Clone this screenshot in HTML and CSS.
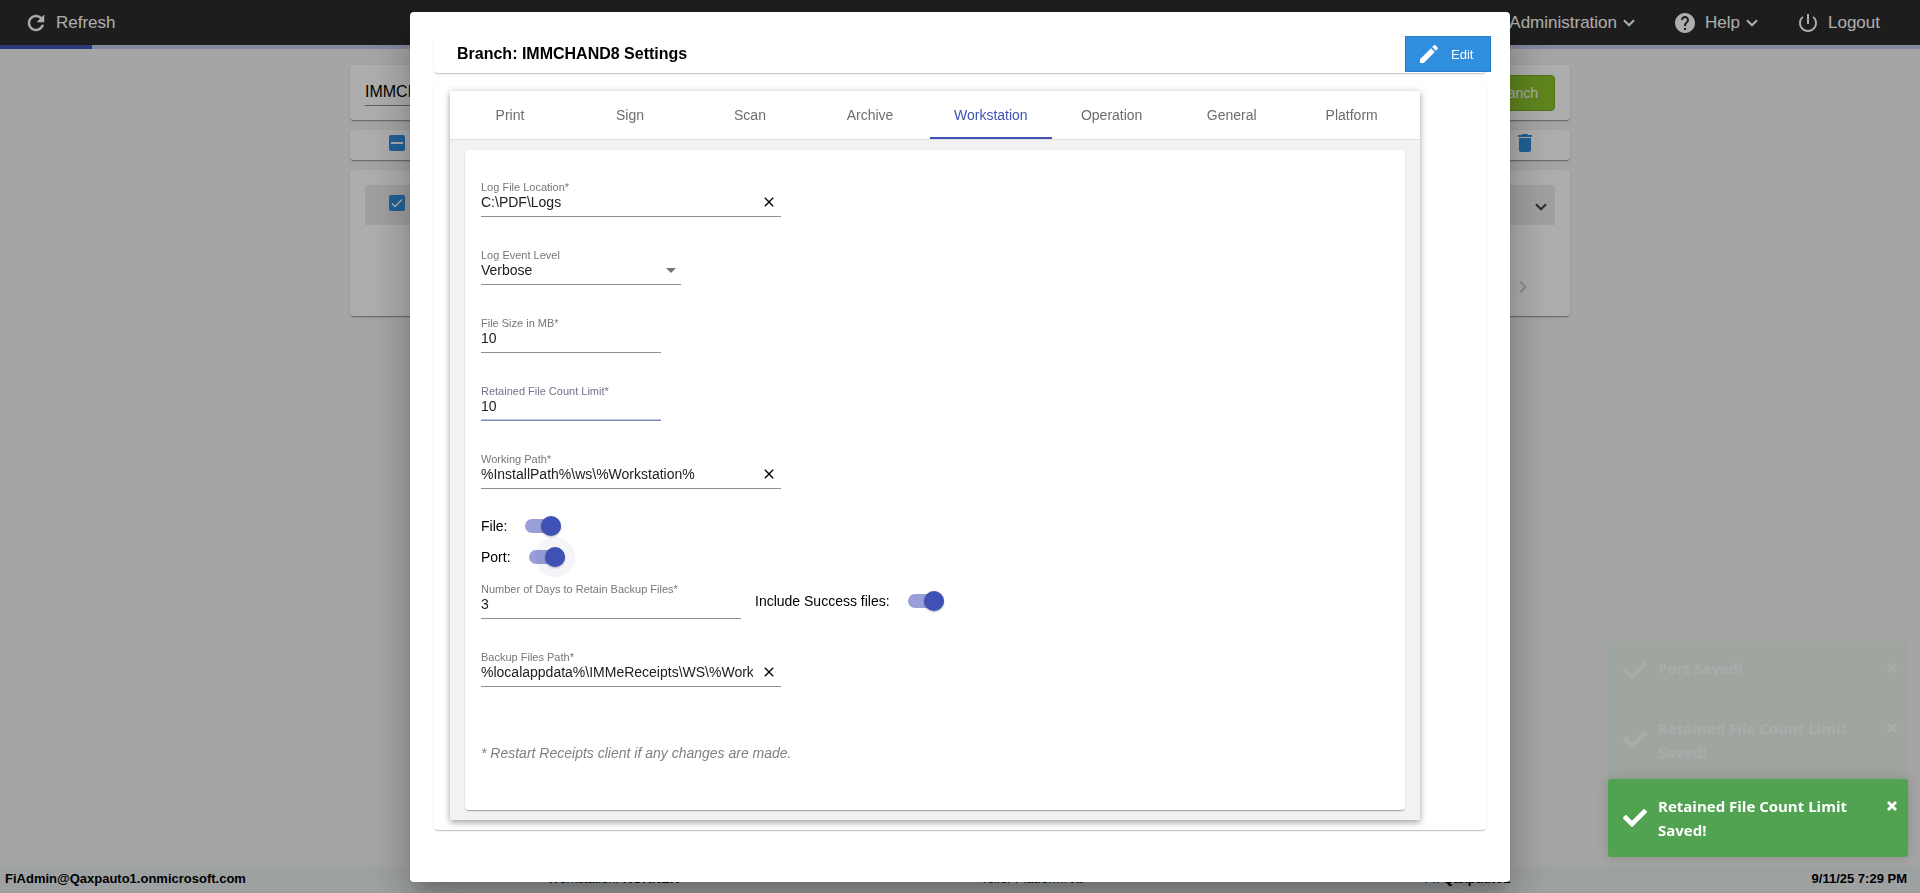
FILE: index.html
```html
<!DOCTYPE html>
<html lang="en">
<head>
<meta charset="utf-8">
<title>Branch Settings</title>
<link rel="stylesheet" href="styles.css">
</head>
<body>
<svg class="sprite" aria-hidden="true">
  <symbol id="i-close" viewBox="0 0 24 24"><path fill="currentColor" d="M19 6.4 17.6 5 12 10.600 6.400 5 5 6.400 10.600 12 5 17.600 6.400 19 12 13.400 17.600 19 19 17.600 13.400 12z"/></symbol>
  <symbol id="i-down" viewBox="0 0 12 8"><path fill="none" stroke="currentColor" stroke-width="2.200" d="M1 1.200 6 6.200 11 1.200"/></symbol>
  <symbol id="i-tick" viewBox="0 0 512 512"><path fill="currentColor" d="M173.900 439.400 7.500 273c-10-10-10-26.200 0-36.200l36.200-36.200c10-10 26.200-10 36.200 0L192 312.700 432.100 72.600c10-10 26.200-10 36.200 0l36.200 36.200c10 10 10 26.200 0 36.200L210.100 439.400c-10 10-26.200 10-36.200 0z"/></symbol>
  <symbol id="i-times" viewBox="0 0 10 10"><path fill="none" stroke="currentColor" stroke-width="2.800" d="M1 1 9 9M9 1 1 9"/></symbol>
</svg>

<div class="app">
  <header class="topbar">
    <button class="nav" type="button">
      <svg class="i24" viewBox="0 0 24 24"><path fill="currentColor" stroke="currentColor" stroke-width=".5" d="M17.650 6.350C16.200 4.900 14.210 4 12 4c-4.420 0-7.990 3.580-7.990 8s3.570 8 7.990 8c3.730 0 6.840-2.550 7.730-6h-2.080c-.82 2.330-3.040 4-5.650 4-3.310 0-6-2.690-6-6s2.690-6 6-6c1.660 0 3.140.69 4.220 1.780L13 11h7V4l-2.350 2.350z"/></svg>
      Refresh
    </button>
    <nav class="menu">
      <button class="nav" type="button">Administration <svg class="caret"><use href="#i-down"/></svg></button>
      <button class="nav" type="button">
        <svg class="i24" viewBox="0 0 24 24"><path fill="currentColor" d="M12 2C6.480 2 2 6.480 2 12s4.480 10 10 10 10-4.480 10-10S17.520 2 12 2zm1 17h-2v-2h2v2zm2.070-7.750-.9.920C13.450 12.900 13 13.500 13 15h-2v-.5c0-1.100.45-2.100 1.170-2.830l1.240-1.260c.37-.36.59-.86.59-1.410 0-1.100-.9-2-2-2s-2 .9-2 2H8c0-2.210 1.790-4 4-4s4 1.790 4 4c0 .88-.36 1.680-.93 2.250z"/></svg>
        Help <svg class="caret"><use href="#i-down"/></svg>
      </button>
      <button class="nav" type="button">
        <svg class="i24" viewBox="0 0 24 24"><path fill="currentColor" d="M13 3h-2v10h2V3zm4.830 2.170-1.420 1.420C17.990 7.860 19 9.810 19 12c0 3.870-3.130 7-7 7s-7-3.130-7-7c0-2.190 1.010-4.140 2.580-5.420L6.170 5.170C4.230 6.820 3 9.260 3 12c0 4.970 4.030 9 9 9s9-4.030 9-9c0-2.740-1.230-5.180-3.170-6.830z"/></svg>
        Logout
      </button>
    </nav>
  </header>
  <div class="progress"><div class="progress-fill"></div></div>

  <main class="page">
    <section class="card search-card">
      <input class="search" type="text" value="IMMCHAND8" aria-label="Search branches">
      <button class="add" type="button">Add Branch</button>
    </section>
    <section class="card bulk-card">
      <span class="box"><input type="checkbox" aria-label="Select all"><svg viewBox="0 0 16 16"><path stroke="currentColor" stroke-width="2" d="M2 8h12"/></svg></span>
      <button class="icon-btn trash" type="button" aria-label="Delete"><svg class="i24" viewBox="0 0 24 24"><path fill="currentColor" d="M6 19c0 1.100.9 2 2 2h8c1.100 0 2-.9 2-2V7H6v12zM19 4h-3.500l-1-1h-5l-1 1H5v2h14V4z"/></svg></button>
    </section>
    <section class="card list-card">
      <div class="row">
        <span class="box"><input type="checkbox" checked aria-label="Select branch"><svg viewBox="0 0 16 16"><path fill="none" stroke="currentColor" stroke-width="1.500" d="M3 8.500 6 11.500 13 4.500"/></svg></span>
        <button class="icon-btn" type="button" aria-label="Expand"><svg class="caret"><use href="#i-down"/></svg></button>
      </div>
      <div class="pager"><button class="icon-btn" type="button" aria-label="Next page"><svg class="i24" viewBox="0 0 24 24"><path fill="currentColor" d="M10 6 8.590 7.410 13.170 12l-4.580 4.590L10 18l6-6z"/></svg></button></div>
    </section>
  </main>

  <footer class="status">
    <span>FiAdmin@Qaxpauto1.onmicrosoft.com</span>
    <span><span class="thin">Workstation:</span> KORNER</span>
    <span class="platform"><span class="thin">Teller Platform:</span> XP</span>
    <span><span class="thin">FI:</span> Qaxpauto1</span>
    <span>9/11/25 7:29 PM</span>
  </footer>
</div>

<div class="overlay">
  <div class="dialog" role="dialog" aria-labelledby="dlg-title">
    <div class="dlg-head">
      <h1 id="dlg-title">Branch: IMMCHAND8 Settings</h1>
      <button class="edit" type="button">
        <svg class="i24" viewBox="0 0 24 24"><path fill="currentColor" d="M3 17.250V21h3.750L17.810 9.940l-3.750-3.750L3 17.250zM20.710 7.040c.39-.39.39-1.020 0-1.410l-2.340-2.340c-.39-.39-1.020-.39-1.410 0l-1.830 1.830 3.750 3.750 1.830-1.830z"/></svg>
        Edit
      </button>
    </div>
    <div class="dlg-body">
      <div class="tabs-panel">
        <div class="tabs" role="tablist">
          <button class="tab" role="tab" type="button">Print</button>
          <button class="tab" role="tab" type="button">Sign</button>
          <button class="tab" role="tab" type="button">Scan</button>
          <button class="tab" role="tab" type="button">Archive</button>
          <button class="tab active" role="tab" type="button" aria-selected="true">Workstation</button>
          <button class="tab" role="tab" type="button">Operation</button>
          <button class="tab" role="tab" type="button">General</button>
          <button class="tab" role="tab" type="button">Platform</button>
        </div>
        <form class="form">
          <div class="fields">
            <div class="field wide">
              <label for="log">Log File Location*</label>
              <div class="control"><input id="log" type="text" value="C:\PDF\Logs"><button class="clear" type="button" aria-label="Clear"><svg><use href="#i-close"/></svg></button></div>
            </div>
            <div class="field level">
              <label for="level">Log Event Level</label>
              <div class="control"><select id="level"><option>Verbose</option></select><span class="arrow"></span></div>
            </div>
            <div class="field short">
              <label for="size">File Size in MB*</label>
              <div class="control"><input id="size" type="text" value="10"></div>
            </div>
            <div class="field short leaving">
              <label for="count">Retained File Count Limit*</label>
              <div class="control"><input id="count" type="text" value="10"></div>
            </div>
            <div class="field wide">
              <label for="work">Working Path*</label>
              <div class="control"><input id="work" type="text" value="%InstallPath%\ws\%Workstation%"><button class="clear" type="button" aria-label="Clear"><svg><use href="#i-close"/></svg></button></div>
            </div>
          </div>
          <div class="toggles">
            <label class="toggle">File:<input type="checkbox" role="switch" checked></label>
            <label class="toggle pressed">Port:<input type="checkbox" role="switch" checked></label>
          </div>
          <div class="fields">
            <div class="pair">
              <div class="field days">
                <label for="days">Number of Days to Retain Backup Files*</label>
                <div class="control"><input id="days" type="text" value="3"></div>
              </div>
              <label class="toggle">Include Success files:<input type="checkbox" role="switch" checked></label>
            </div>
            <div class="field wide">
              <label for="backup">Backup Files Path*</label>
              <div class="control"><input id="backup" type="text" value="%localappdata%\IMMeReceipts\WS\%Workstation%"><button class="clear" type="button" aria-label="Clear"><svg><use href="#i-close"/></svg></button></div>
            </div>
          </div>
          <p class="note">* Restart Receipts client if any changes are made.</p>
        </form>
      </div>
    </div>
  </div>
</div>

<div class="toasts">
  <div class="toast fading"><svg class="tick"><use href="#i-tick"/></svg><span class="msg">Port Saved!</span><button type="button" aria-label="Close"><svg><use href="#i-times"/></svg></button></div>
  <div class="toast fading"><svg class="tick"><use href="#i-tick"/></svg><span class="msg">Retained File Count Limit Saved!</span><button type="button" aria-label="Close"><svg><use href="#i-times"/></svg></button></div>
  <div class="toast"><svg class="tick"><use href="#i-tick"/></svg><span class="msg">Retained File Count Limit Saved!</span><button type="button" aria-label="Close"><svg><use href="#i-times"/></svg></button></div>
</div>
</body>
</html>
```
FILE: styles.css
```css
* { box-sizing: border-box; }
body { margin: 0; font-family: "Liberation Sans", Arial, sans-serif; font-size: 14px; color: #000; background: #f3f3f3; }
button, input, select { font: inherit; color: inherit; background: none; border: 0; margin: 0; padding: 0; outline: 0; border-radius: 0; }
.sprite { display: none; }
.i24 { width: 24px; height: 24px; flex: none; display: block; }

.app { min-height: 100vh; display: flex; flex-direction: column; }
.topbar { height: 45px; background: #2c2c2c; color: #fff; display: flex; align-items: center; justify-content: space-between; padding: 0 40px 0 24px; font-size: 17px; }
.menu { display: flex; gap: 38px; }
.nav { display: flex; align-items: center; gap: 8px; }
.caret { width: 12px; height: 8px; flex: none; display: block; }
.nav .caret { margin-left: -2px; }
.progress { height: 4px; background: #c5cae9; }
.progress-fill { width: 92px; height: 4px; background: #3f51b5; }

.page { flex: 1; width: 100%; max-width: 1220px; margin: 0 auto; padding-top: 16px; display: flex; flex-direction: column; gap: 10px; }
.card { background: #fff; border-radius: 4px; box-shadow: 0 2px 1px -1px rgba(0,0,0,.2), 0 1px 1px rgba(0,0,0,.14), 0 1px 3px rgba(0,0,0,.12); }
.search-card { display: flex; justify-content: space-between; align-items: flex-start; padding: 10px 15px 9px; }
.search { width: 300px; height: 31px; padding-top: 3px; font-size: 16px; border-bottom: 1px solid #8a8a8a; }
.add { height: 36px; padding: 0 16px; color: #fff; background: #8cc42b; border: 1px solid #78a822; border-radius: 4px; }
.bulk-card { height: 30px; display: flex; align-items: center; justify-content: space-between; padding: 0 33px 4px 39px; }
.list-card { padding: 15px 15px 17px; }
.row { height: 40px; background: #ebebeb; display: flex; align-items: flex-start; justify-content: space-between; padding: 10px 8px 0 24px; color: #444; }
.row .icon-btn { padding-top: 8px; }
.pager { display: flex; justify-content: flex-end; padding: 50px 20px 0 0; color: #cfcfcf; }
.box { display: grid; width: 16px; height: 16px; border-radius: 2px; background: #308ede; color: #fff; }
.box input, .box svg { grid-area: 1 / 1; width: 16px; height: 16px; appearance: none; }
.trash { color: #308ede; }

.status { height: 26px; flex: none; background: #e9edee; display: flex; justify-content: space-between; align-items: center; padding: 0 13px 3px 5px; font-size: 13px; font-weight: 700; }
.thin { font-weight: 400; }
.platform { padding-right: 35px; }

.overlay { position: fixed; inset: 0; background: rgba(0,0,0,.32); display: flex; justify-content: center; align-items: flex-start; padding-top: 12px; }
.dialog { width: 1100px; max-width: 90vw; background: #fff; border-radius: 4px; padding: 24px 24px 52px; box-shadow: 0 11px 15px -7px rgba(0,0,0,.2), 0 24px 38px 3px rgba(0,0,0,.14), 0 9px 46px 8px rgba(0,0,0,.12); }
.dlg-head, .dlg-body { border-radius: 4px; box-shadow: 0 2px 1px -1px rgba(0,0,0,.14), 0 1px 1px rgba(0,0,0,.08), 0 1px 3px rgba(0,0,0,.06); }
.dlg-head { height: 37px; display: flex; align-items: flex-start; justify-content: space-between; padding-left: 23px; margin-bottom: 8px; }
.dlg-head h1 { margin: 0; font-size: 16px; line-height: 36px; }
.edit { display: flex; align-items: center; gap: 10px; width: 86px; height: 36px; padding-left: 11px; margin-right: -5px; background: #308ede; border: 1px solid #2a7cc4; color: #fff; font-size: 13px; }
.dlg-body { padding: 10px 66px 10px 16px; }
.tabs-panel { padding-bottom: 10px; background: #f2f2f2; box-shadow: 0 3px 6px rgba(0,0,0,.28), 0 0 8px rgba(0,0,0,.12); }
.tabs { display: flex; margin-bottom: 10px; background: #fff; border-bottom: 1px solid #dedede; }
.tab { height: 48px; min-width: 120px; padding: 2px 24px 0; color: #6d6d6d; border-bottom: 2px solid transparent; }
.tab.active { color: #3f51b5; border-bottom-color: #3f51b5; }
.form { display: flow-root; margin: 0 15px; padding: 31px 16px 47px; background: #fff; border-radius: 4px; box-shadow: 0 2px 1px -1px rgba(0,0,0,.2), 0 1px 1px rgba(0,0,0,.1), 0 1px 3px rgba(0,0,0,.08); }
.fields { display: flex; flex-direction: column; gap: 32px; align-items: flex-start; }
.field { border-bottom: 1px solid #8f8f8f; padding-bottom: 5px; }
.field label { display: block; font-size: 11px; line-height: 12px; color: #777; white-space: nowrap; }
.control { display: flex; align-items: center; height: 18px; }
.control input, .control select { flex: 1; min-width: 0; height: 18px; color: #212121; appearance: none; }
.wide { width: 300px; }
.level { width: 200px; }
.short { width: 180px; }
.days { width: 260px; }
.leaving { border-bottom-color: #7c88b8; box-shadow: inset 0 -1px #c0c6e0; }
.field.leaving label { color: #73738a; }
.clear { width: 24px; height: 16px; margin-left: 4px; display: grid; place-items: center; color: #000; }
.clear svg { width: 16px; height: 16px; }
.arrow { border: 5px solid transparent; border-top-color: #757575; border-bottom: 0; margin-right: 5px; }
.toggles { margin: 25px 0 14px; display: flex; flex-direction: column; gap: 7px; }
.toggle { display: flex; align-items: center; gap: 18px; height: 24px; }
.toggle input { appearance: none; width: 36px; height: 14px; border-radius: 7px; background: #989fd9; display: flex; align-items: center; justify-content: flex-end; }
.toggle input::after { content: ""; width: 20px; height: 20px; flex: none; border-radius: 50%; background: #3f51b5; box-shadow: 0 1px 2px rgba(0,0,0,.3); }
.pressed input::after { box-shadow: 0 0 0 10px rgba(63,61,151,.06), 0 1px 2px rgba(0,0,0,.3); }
.pair { display: flex; align-items: center; gap: 14px; }
.note { margin: 56px 0 0; line-height: 20px; font-style: italic; color: #808080; }

.toasts { position: fixed; right: 12px; bottom: 36px; width: 300px; font-family: "Open Sans", "Noto Sans", sans-serif; font-size: 15px; line-height: 24px; font-weight: 700; color: #fff; }
.toast { display: flex; align-items: center; gap: 11px; min-height: 60px; padding: 15px 11px 15px 15px; background: #51a351; border-radius: 3px; box-shadow: 0 0 12px rgba(120,120,120,.6); }
.fading { opacity: .07; box-shadow: none; }
.tick { width: 24px; height: 24px; flex: none; }
.msg { flex: 1; align-self: flex-start; }
.toast button { align-self: flex-start; width: 10px; height: 24px; display: grid; place-items: center; }
.toast button svg { width: 10px; height: 10px; }
```
